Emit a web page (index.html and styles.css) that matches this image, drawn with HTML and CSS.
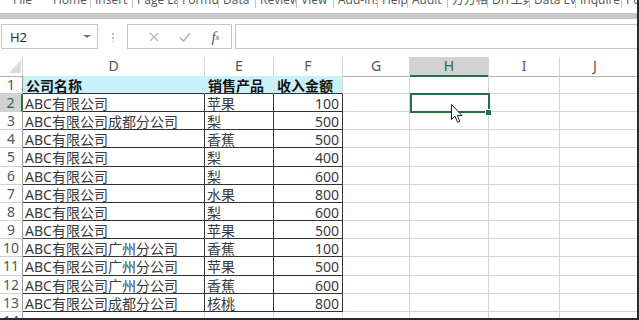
FILE: index.html
```html
<!DOCTYPE html>
<html>
<head>
<meta charset="utf-8">
<link rel="stylesheet" href="styles.css">
</head>
<body>
<div class="app">
  <div class="tabs">
    <span class="tab">File</span>
    <span class="tab">Home</span>
    <span class="tab">Insert</span>
    <span class="tab">Page Layout</span>
    <span class="tab">Formulas</span>
    <span class="tab">Data</span>
    <span class="tab">Review</span>
    <span class="tab">View</span>
    <span class="tab">Add-ins</span>
    <span class="tab">Help</span>
    <span class="tab">Audit</span>
    <span class="tab">方方格子</span>
    <span class="tab">DIY工具箱</span>
    <span class="tab">Data Everywhere</span>
    <span class="tab">Inquire</span>
    <span class="tab">Power Pivot</span>
  </div>
  <div class="band"></div>
  <div class="fbar">
    <div class="namebox"><span>H2</span><span class="drop"></span></div>
    <div class="grip"><span class="dots"></span></div>
    <div class="fxbox">
      <span class="fxbtn"><svg width="10" height="10" viewBox="0 0 10 10"><path d="M1 1L9 9M9 1L1 9" stroke="#b4b4b4" stroke-width="1.3" fill="none"/></svg></span>
      <span class="fxbtn"><svg width="12" height="10" viewBox="0 0 12 10"><path d="M1 5.5L4.5 9L11 1" stroke="#b4b4b4" stroke-width="1.6" fill="none"/></svg></span>
      <span class="fxbtn fx">f<sub>x</sub></span>
    </div>
    <div class="input"></div>
  </div>
  <div class="sheet">
    <div class="row head">
      <div class="corner"><svg width="23" height="19" viewBox="0 0 23 19"><path d="M9 16L21 16L21 3Z" fill="#dcdcdc"/></svg></div>
      <div class="ch">D</div><div class="ch">E</div><div class="ch">F</div><div class="ch">G</div><div class="ch selh">H</div><div class="ch">I</div><div class="ch jh">J</div><div class="ch end"></div>
    </div>
    <div class="row">
      <div class="rh">1</div>
      <div class="c t1">公司名称</div><div class="c t1">销售产品</div><div class="c t1 last">收入金额</div>
      <div class="c"></div><div class="c"></div><div class="c"></div><div class="c j"></div><div class="c end"></div>
    </div>
    <div class="row">
      <div class="rh selr">2</div>
      <div class="c d">ABC有限公司</div><div class="c d">苹果</div><div class="c d num">100</div>
      <div class="c"></div><div class="c"></div><div class="c"></div><div class="c j"></div><div class="c end"></div>
    </div>
    <div class="row">
      <div class="rh">3</div>
      <div class="c d">ABC有限公司成都分公司</div><div class="c d">梨</div><div class="c d num">500</div>
      <div class="c"></div><div class="c"></div><div class="c"></div><div class="c j"></div><div class="c end"></div>
    </div>
    <div class="row">
      <div class="rh">4</div>
      <div class="c d">ABC有限公司</div><div class="c d">香蕉</div><div class="c d num">500</div>
      <div class="c"></div><div class="c"></div><div class="c"></div><div class="c j"></div><div class="c end"></div>
    </div>
    <div class="row tall">
      <div class="rh">5</div>
      <div class="c d">ABC有限公司</div><div class="c d">梨</div><div class="c d num">400</div>
      <div class="c"></div><div class="c"></div><div class="c"></div><div class="c j"></div><div class="c end"></div>
    </div>
    <div class="row">
      <div class="rh">6</div>
      <div class="c d">ABC有限公司</div><div class="c d">梨</div><div class="c d num">600</div>
      <div class="c"></div><div class="c"></div><div class="c"></div><div class="c j"></div><div class="c end"></div>
    </div>
    <div class="row">
      <div class="rh">7</div>
      <div class="c d">ABC有限公司</div><div class="c d">水果</div><div class="c d num">800</div>
      <div class="c"></div><div class="c"></div><div class="c"></div><div class="c j"></div><div class="c end"></div>
    </div>
    <div class="row">
      <div class="rh">8</div>
      <div class="c d">ABC有限公司</div><div class="c d">梨</div><div class="c d num">600</div>
      <div class="c"></div><div class="c"></div><div class="c"></div><div class="c j"></div><div class="c end"></div>
    </div>
    <div class="row">
      <div class="rh">9</div>
      <div class="c d">ABC有限公司</div><div class="c d">苹果</div><div class="c d num">500</div>
      <div class="c"></div><div class="c"></div><div class="c"></div><div class="c j"></div><div class="c end"></div>
    </div>
    <div class="row">
      <div class="rh">10</div>
      <div class="c d">ABC有限公司广州分公司</div><div class="c d">香蕉</div><div class="c d num">100</div>
      <div class="c"></div><div class="c"></div><div class="c"></div><div class="c j"></div><div class="c end"></div>
    </div>
    <div class="row tall">
      <div class="rh">11</div>
      <div class="c d">ABC有限公司广州分公司</div><div class="c d">苹果</div><div class="c d num">500</div>
      <div class="c"></div><div class="c"></div><div class="c"></div><div class="c j"></div><div class="c end"></div>
    </div>
    <div class="row">
      <div class="rh">12</div>
      <div class="c d">ABC有限公司广州分公司</div><div class="c d">香蕉</div><div class="c d num">600</div>
      <div class="c"></div><div class="c"></div><div class="c"></div><div class="c j"></div><div class="c end"></div>
    </div>
    <div class="row">
      <div class="rh">13</div>
      <div class="c d">ABC有限公司成都分公司</div><div class="c d">核桃</div><div class="c d num">800</div>
      <div class="c"></div><div class="c"></div><div class="c"></div><div class="c j"></div><div class="c end"></div>
    </div>
    <div class="row">
      <div class="rh">14</div>
      <div class="c"></div><div class="c"></div><div class="c"></div>
      <div class="c"></div><div class="c"></div><div class="c"></div><div class="c j"></div><div class="c end"></div>
    </div>
  </div>
  <div class="selbox"></div>
  <div class="handle"></div>
  <svg class="cursor" width="13" height="20" viewBox="0 0 13 20"><path d="M0.5 0.5L0.5 15.5L4 12.2L6.6 18.3L8.8 17.4L6.3 11.5L11 11.5Z" fill="#fff" stroke="#222" stroke-width="1"/></svg>
</div>
</body>
</html>
```
FILE: styles.css
```css
body {
  margin: 0;
  width: 639px;
  height: 320px;
  overflow: hidden;
  background: #fff;
}
.app {
  position: relative;
  width: 639px;
  height: 320px;
  box-sizing: border-box;
  border-right: 2px solid #2a2a2a;
  border-bottom: 2px solid #2a2a2a;
  overflow: hidden;
  display: flex;
  flex-direction: column;
  font-family: "Noto Sans", "Noto Sans CJK SC", sans-serif;
  background: #fff;
}
.tabs {
  flex: none;
  height: 8px;
  overflow: hidden;
  display: flex;
  font-family: "Open Sans", "Noto Sans CJK SC", sans-serif;
  font-size: 12px;
  color: #555;
}
.tab {
  flex: none;
  box-sizing: border-box;
  height: 16px;
  margin-top: -8px;
  line-height: 16px;
  padding-left: 4px;
  white-space: nowrap;
  overflow: hidden;
  border-left: 1px solid #c6c6c6;
}
.tab:nth-child(1) { width: 49px; padding-left: 13px; border-left: none; }
.tab:nth-child(2) { width: 41px; border-left: none; }
.tab:nth-child(3) { width: 42px; }
.tab:nth-child(4) { width: 45px; }
.tab:nth-child(5) { width: 41px; }
.tab:nth-child(6) { width: 37px; }
.tab:nth-child(7) { width: 41px; }
.tab:nth-child(8) { width: 37px; }
.tab:nth-child(9) { width: 44px; }
.tab:nth-child(10) { width: 30px; }
.tab:nth-child(11) { width: 40px; }
.tab:nth-child(12) { width: 40px; }
.tab:nth-child(13) { width: 42px; }
.tab:nth-child(14) { width: 46px; }
.tab:nth-child(15) { width: 46px; }
.tab:nth-child(16) { width: 30px; }

.band {
  flex: none;
  height: 6px;
  margin-top: 5px;
  background: #c8c8c8;
}
.fbar {
  flex: none;
  height: 25px;
  margin-top: 5px;
  display: flex;
}
.namebox {
  margin-left: 1px;
  width: 97px;
  box-sizing: border-box;
  border: 1px solid #c6c6c6;
  display: flex;
  align-items: center;
  justify-content: space-between;
  padding: 0 6px 0 8px;
  font-family: "Open Sans", sans-serif;
  font-size: 13px;
  color: #222;
}
.drop {
  width: 0;
  height: 0;
  border-left: 4px solid transparent;
  border-right: 4px solid transparent;
  border-top: 3px solid #777;
}
.grip {
  width: 29px;
  display: flex;
  align-items: center;
  justify-content: center;
}
.dots {
  width: 2px;
  height: 10px;
  background: radial-gradient(circle, #c0c0c0 0.9px, transparent 1px) 0 0 / 2px 4px repeat-y;
}
.fxbox {
  width: 105px;
  box-sizing: border-box;
  border: 1px solid #c6c6c6;
  display: flex;
  align-items: center;
  padding-left: 10px;
}
.fxbtn {
  width: 34px;
  display: flex;
  justify-content: center;
  align-items: center;
}
.fx {
  font-family: "Liberation Serif", serif;
  font-style: italic;
  font-size: 15px;
  color: #555;
  line-height: 16px;
}
.fx sub {
  font-size: 9px;
  vertical-align: -2px;
}
.input {
  flex: 1;
  margin-left: 3px;
  border: 1px solid #c6c6c6;
  border-right: none;
}

.sheet {
  flex: 1;
  margin-top: 8px;
  overflow: hidden;
}
.row {
  display: grid;
  grid-template-columns: 23px 182px 69px 69px 67px 79px 71px 70px 7px;
  height: 18px;
}
.row.tall { height: 19px; }
.row.head { height: 19px; }

.corner {
  border-bottom: 1px solid #b4b4b4;
  border-right: 1px solid #d0d0d0;
}
.corner svg { display: block; }
.ch {
  box-sizing: border-box;
  border-right: 1px solid #d4d4d4;
  border-bottom: 1px solid #b4b4b4;
  text-align: center;
  font-size: 14px;
  line-height: 18px;
  color: #555;
}
.ch.selh {
  background: #d2d2d2;
  border-bottom: 2px solid #217346;
  color: #2e6b42;
}
.ch.jh { border-right: none; }
.ch.end { border-right: none; }

.rh {
  box-sizing: border-box;
  border-right: 1px solid #9c9c9c;
  border-bottom: 1px solid #d0d0d0;
  text-align: center;
  font-size: 14px;
  line-height: 17px;
  color: #555;
  overflow: hidden;
}
.rh.selr {
  background: #d2d2d2;
  border-right: 2px solid #217346;
  color: #2e6b42;
}
.c {
  box-sizing: border-box;
  border-right: 1px solid #d4d4d4;
  border-bottom: 1px solid #d4d4d4;
  font-size: 14px;
  line-height: 19px;
  padding: 0 2px;
  white-space: nowrap;
  overflow: hidden;
  color: #3a3a3a;
}
.c.j, .c.end { border-right: none; }
.c.t1 {
  background: #c9f1fa;
  border-right-color: #c9f1fa;
  border-bottom: 1px solid #333;
  font-weight: bold;
  color: #111;
  padding-left: 3px;
}
.c.t1.last { border-right-color: #d4d4d4; }
.c.d {
  border-right: 1px solid #333;
  border-bottom: 1px solid #333;
}
.c.num {
  text-align: right;
  padding-right: 3px;
}

.selbox {
  position: absolute;
  left: 410px;
  top: 93px;
  width: 80px;
  height: 20px;
  box-sizing: border-box;
  border: 2px solid #217346;
}
.handle {
  position: absolute;
  left: 485px;
  top: 109px;
  width: 7px;
  height: 7px;
  box-sizing: border-box;
  border: 1px solid #fff;
  background: #217346;
}
.cursor {
  position: absolute;
  left: 451px;
  top: 104px;
}
```
